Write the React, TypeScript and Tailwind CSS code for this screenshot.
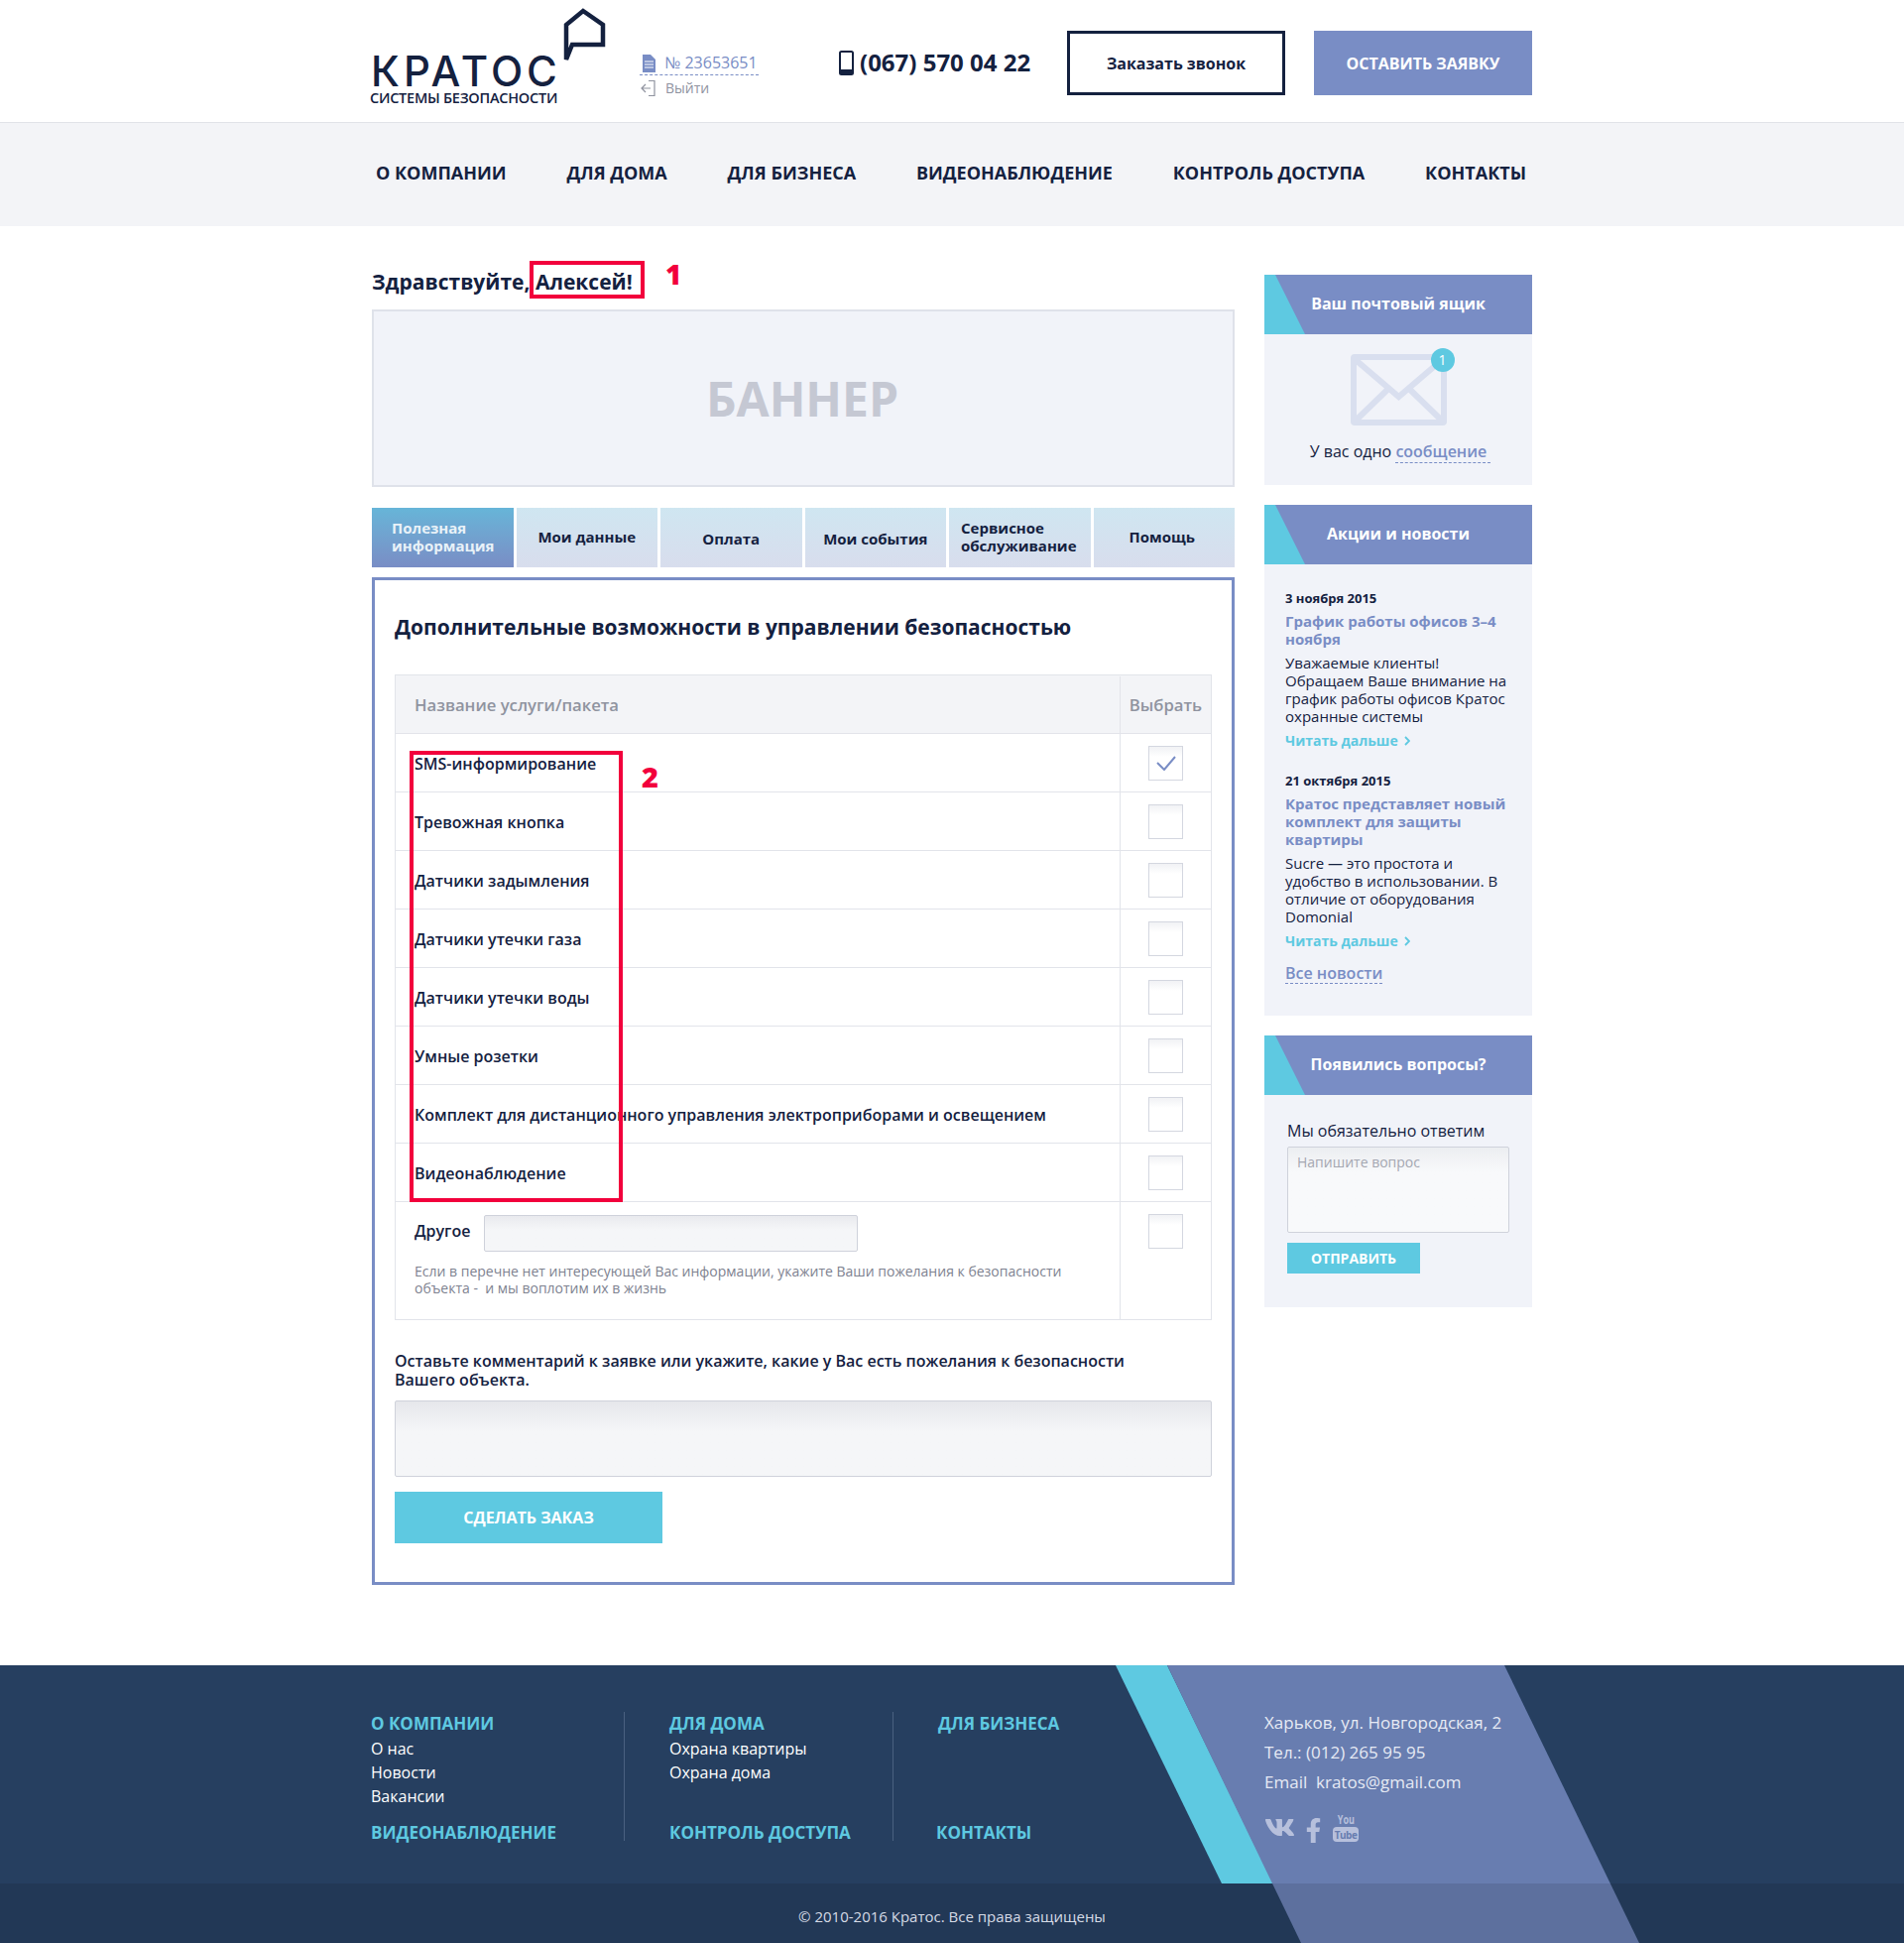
import React from 'react';
import { FaVk, FaFacebookF } from 'react-icons/fa';

const navItems = ['О КОМПАНИИ', 'ДЛЯ ДОМА', 'ДЛЯ БИЗНЕСА', 'ВИДЕОНАБЛЮДЕНИЕ', 'КОНТРОЛЬ ДОСТУПА', 'КОНТАКТЫ'];

const tabs = [
  { label: 'Полезная информация', active: true, cls: 'justify-start pb-[2px] pl-5 pr-2' },
  { label: 'Мои данные', cls: 'justify-center pb-[2px]' },
  { label: 'Оплата', cls: 'justify-center pt-[2px]' },
  { label: 'Мои события', cls: 'justify-center pt-[2px]' },
  { label: 'Сервисное обслуживание', cls: 'justify-start pb-[2px] pl-3 pr-1' },
  { label: 'Помощь', cls: 'justify-center pb-[2px] pr-[4px]' },
];

const services = [
  'SMS-информирование',
  'Тревожная кнопка',
  'Датчики задымления',
  'Датчики утечки газа',
  'Датчики утечки воды',
  'Умные розетки',
  'Комплект для дистанционного управления электроприборами и освещением',
  'Видеонаблюдение',
];

const news = [
  {
    date: '3 ноября 2015',
    title: 'График работы офисов 3–4 ноября',
    text: 'Уважаемые клиенты! Обращаем Ваше внимание на график работы офисов Кратос охранные системы',
  },
  {
    date: '21 октября 2015',
    title: 'Кратос представляет новый комплект для защиты квартиры',
    text: 'Sucre — это простота и удобство в использовании. В отличие от оборудования Domonial',
  },
];

const Checkbox: React.FC<{ checked?: boolean }> = ({ checked }) => (
  <div className="flex h-[35px] w-[35px] items-center justify-center border border-[#d4d7e0] bg-gradient-to-b from-[#f1f2f5] to-white to-30%">
    {checked && (
      <svg width="20" height="15" viewBox="0 0 20 15" fill="none">
        <path d="M1 7l7 7L19 1" stroke="#798dc5" strokeWidth="2" />
      </svg>
    )}
  </div>
);

const CardHeader: React.FC<{ title: string }> = ({ title }) => (
  <div className="relative flex h-[60px] items-center justify-center bg-[#798dc5] pb-[2px] text-[16px] font-bold text-white">
    <svg className="absolute left-0 top-0" width="41" height="60" viewBox="0 0 41 60">
      <polygon points="0,0 11,0 41,60 0,60" fill="#5ec9e1" />
    </svg>
    <span className="relative">{title}</span>
  </div>
);

const FooterColumn: React.FC<{ title: string; links: string[]; bottom: string; cls: string; bottomCls?: string }> = ({ title, links, bottom, cls, bottomCls }) => (
  <div className={`flex h-[130px] flex-col pt-[2px] ${cls}`}>
    <div className="text-[17px] font-bold leading-[20px] text-[#5ec9e1]">{title}</div>
    <div className="mt-[3px] flex-1 text-[16px] leading-[24px] text-white">
      {links.map(l => (
        <div key={l}>{l}</div>
      ))}
    </div>
    <div className={`-mb-[2px] text-[17px] font-bold leading-[20px] text-[#5ec9e1] ${bottomCls ?? ''}`}>{bottom}</div>
  </div>
);

export default function App() {
  return (
    <div className="relative min-h-[1959px] overflow-hidden bg-white font-['Open_Sans',sans-serif] text-[#14213f]">
      <header className="h-[124px] border-b border-[#e1e3e8]">
        <div className="mx-auto flex h-[123px] w-[1170px] items-start">
          <div className="relative h-[123px] w-[270px] shrink-0">
            <div className="absolute -left-px top-[54px] font-['Inter',sans-serif] text-[42px] font-medium leading-[36px] tracking-[4px]">КРАТОС</div>
            <div className="absolute -left-[2px] top-[90px] text-[14.5px] font-semibold leading-[18px] tracking-[-0.25px]">СИСТЕМЫ БЕЗОПАСНОСТИ</div>
            <svg className="absolute left-[193px] top-[8px]" width="44" height="56" viewBox="0 0 44 56" fill="none">
              <path d="M20 3L40 17V37H9L3 52V17Z" stroke="#14213f" strokeWidth="4.5" />
            </svg>
          </div>
          <div className="w-[201px] shrink-0 pt-[53px]">
            <div className="flex w-[120px] items-center gap-[8px] border-b border-dashed border-[#798dc5] pb-[1px] pl-[2px] text-[16px] font-medium leading-[21px] text-[#798dc5]">
              <svg width="15" height="18" viewBox="0 0 15 18">
                <path d="M1 0h8l5 5v13H1z" fill="#798dc5" />
                <path d="M3 7h9M3 10h9M3 13h9" stroke="#fff" strokeWidth="1" />
              </svg>
              № 23653651
            </div>
            <div className="mt-[3px] flex items-center gap-[9px] text-[14px] leading-[20px] text-[#8f939f]">
              <svg width="17" height="18" viewBox="0 0 17 18" fill="none" stroke="#8f939f" strokeWidth="1.2">
                <path d="M9 1.5h6v15H9M11 9H2M6 5L2 9l4 4" />
              </svg>
              Выйти
            </div>
          </div>
          <div className="flex w-[230px] shrink-0 items-center gap-[6px] pt-[49px]">
            <svg width="15" height="25" viewBox="0 0 15 25">
              <rect x="1" y="1" width="13" height="23" rx="1.5" fill="none" stroke="#14213f" strokeWidth="2" />
              <rect x="1" y="19" width="13" height="5" fill="#14213f" />
            </svg>
            <span className="text-[24px] font-bold leading-[28px]">(067) 570 04 22</span>
          </div>
          <div className="mt-[31px] flex h-[65px] w-[220px] shrink-0 items-center justify-center border-[3px] border-[#14213f] text-[16px] font-bold">
            Заказать звонок
          </div>
          <div className="ml-[29px] mt-[31px] flex h-[65px] w-[220px] shrink-0 items-center justify-center bg-[#798dc5] text-[16px] font-bold text-white">
            ОСТАВИТЬ ЗАЯВКУ
          </div>
        </div>
      </header>

      <nav className="h-[104px] bg-[#f3f4f7]">
        <div className="mx-auto flex h-full w-[1170px] items-center justify-between pb-[3px] pl-[4px] pr-[6px] text-[18px] font-bold">
          {navItems.map(item => (
            <span key={item}>{item}</span>
          ))}
        </div>
      </nav>

      <main className="mx-auto flex w-[1170px] justify-between">
        <section className="w-[870px] pt-[41px]">
          <h1 className="mb-[13px] h-[30px] text-[21px] font-bold leading-[30px]">Здравствуйте, Алексей!</h1>
          <div className="mb-[21px] flex h-[179px] items-center justify-center border-2 border-[#dfe2ea] bg-[#f1f3f9] pr-[2px] text-[48px] font-bold text-[#c5c8d3]">
            БАННЕР
          </div>
          <div className="mb-[10px] grid h-[60px] grid-cols-6 gap-[3px]">
            {tabs.map(tab => (
              <div
                key={tab.label}
                className={`flex items-center text-[15px] font-bold leading-[18px] ${tab.cls} ${
                  tab.active
                    ? 'bg-gradient-to-b from-[#66b5d8] to-[#798dc5] text-[#e9f2f8]'
                    : 'bg-gradient-to-b from-[#cfe6f1] to-[#d8dded]'
                }`}
              >
                <span>{tab.label}</span>
              </div>
            ))}
          </div>

          <div className="h-[1016px] border-[3px] border-[#798dc5] px-[20px] pt-[32px]">
            <h2 className="mb-[33px] text-[21px] font-bold leading-[30px]">Дополнительные возможности в управлении безопасностью</h2>

            <div className="border border-[#e2e4ea] text-[16px] font-semibold">
              <div className="flex h-[59px] border-b border-[#e2e4ea] bg-[#f3f4f7] pt-px text-[16.7px] text-[#8f939f]">
                <div className="flex flex-1 items-center pl-[19px]">Название услуги/пакета</div>
                <div className="flex w-[92px] items-center justify-center border-l border-[#e2e4ea]">Выбрать</div>
              </div>
              {services.map((s, i) => (
                <div key={s} className="flex h-[59px] border-b border-[#e2e4ea]">
                  <div className="flex flex-1 items-center pl-[19px] pt-px">{s}</div>
                  <div className="flex w-[92px] items-center justify-center border-l border-[#e2e4ea]">
                    <Checkbox checked={i === 0} />
                  </div>
                </div>
              ))}
              <div className="flex h-[118px]">
                <div className="flex-1 pl-[19px] pt-[13px]">
                  <div className="flex items-start gap-[14px]">
                    <span className="mt-[4px] text-[16px] leading-[24px]">Другое</span>
                    <div className="h-[37px] w-[377px] rounded-[2px] border border-[#cfd2db] bg-gradient-to-b from-[#e9eaee] to-[#f5f6f8] to-40%" />
                  </div>
                  <p className="mt-[11px] w-[680px] text-[14px] font-normal leading-[17px] text-[#7e8290]">
                    Если в перечне нет интересующей Вас информации, укажите Ваши пожелания к безопасности объекта -&nbsp; и мы воплотим их в жизнь
                  </p>
                </div>
                <div className="flex w-[92px] justify-center border-l border-[#e2e4ea] pt-[12px]">
                  <Checkbox />
                </div>
              </div>
            </div>

            <p className="mb-[11px] mt-[32px] w-[760px] text-[16px] font-semibold leading-[19px]">
              Оставьте комментарий к заявке или укажите, какие у Вас есть пожелания к безопасности Вашего объекта.
            </p>
            <div className="h-[77px] rounded-[2px] border border-[#cfd2db] bg-gradient-to-b from-[#e6e7eb] to-[#f5f6f8] to-40%" />
            <div className="mt-[15px] flex h-[52px] w-[270px] items-center justify-center bg-[#5ec9e1] text-[16px] font-bold text-white">
              СДЕЛАТЬ ЗАКАЗ
            </div>
          </div>
        </section>

        <aside className="w-[270px] pt-[49px]">
          <div className="mb-[20px] h-[212px] bg-[#f1f3f9]">
            <CardHeader title="Ваш почтовый ящик" />
            <div className="flex flex-col items-center pt-[20px]">
              <div className="relative h-[72px] w-[97px]">
                <svg width="97" height="72" viewBox="0 0 97 72" fill="none" stroke="#d9dfef" strokeWidth="6">
                  <rect x="3" y="3" width="91" height="66" rx="1" />
                  <path d="M4 5l44.5 38L93 5M5 67l32-31M92 67L60 36" />
                </svg>
                <div className="absolute left-[81px] top-[-6px] flex h-[24px] w-[24px] items-center justify-center rounded-full bg-[#5ec9e1] text-[14px] leading-none text-white">1</div>
              </div>
              <div className="mt-[15px] pl-[4px] text-[16px] leading-[22px]">
                У вас одно{' '}
                <span className="border-b border-dashed border-[#798dc5] pr-1 font-semibold text-[#798dc5]">сообщение</span>
              </div>
            </div>
          </div>

          <div className="mb-[20px] h-[515px] bg-[#f1f3f9]">
            <CardHeader title="Акции и новости" />
            <div className="px-[21px] pt-[25px]">
              {news.map(n => (
                <div key={n.date} className="mb-[22px]">
                  <div className="text-[13px] font-bold leading-[18px]">{n.date}</div>
                  <div className="mt-[5px] text-[15px] font-bold leading-[18px] text-[#798dc5]">{n.title}</div>
                  <p className="mt-[6px] text-[15px] leading-[18px]">{n.text}</p>
                  <div className="mt-[7px] flex items-center gap-[6px] text-[14px] font-bold leading-[18px] text-[#5ec9e1]">
                    Читать дальше
                    <svg width="6" height="10" viewBox="0 0 6 10" fill="none" stroke="#5ec9e1" strokeWidth="1.8">
                      <path d="M1 1l4 4-4 4" />
                    </svg>
                  </div>
                </div>
              ))}
              <span className="-mt-[9px] block w-fit border-b border-dashed border-[#798dc5] text-[16px] font-semibold leading-[20px] text-[#798dc5]">Все новости</span>
            </div>
          </div>

          <div className="h-[274px] bg-[#f1f3f9]">
            <CardHeader title="Появились вопросы?" />
            <div className="px-[23px] pt-[25px]">
              <div className="text-[16px] leading-[22px]">Мы обязательно ответим</div>
              <div className="mt-[5px] h-[87px] w-[224px] rounded-[2px] border border-[#cfd2db] bg-gradient-to-b from-[#eceef1] to-[#f8f9fb] to-30% px-[9px] py-[5px] text-[14px] leading-[20px] text-[#a4a7b1]">
                Напишите вопрос
              </div>
              <div className="mt-[10px] flex h-[31px] w-[134px] items-center justify-center bg-[#5ec9e1] text-[14px] font-bold text-white">
                ОТПРАВИТЬ
              </div>
            </div>
          </div>
        </aside>
      </main>

      <footer className="relative mt-[81px] h-[280px] overflow-hidden bg-[#263f60]">
        <svg className="absolute left-0 top-0" width="1920" height="280" viewBox="0 0 1920 280">
          <polygon points="1125,0 1177,0 1284,220 1232,220" fill="#5ec9e1" />
          <polygon points="1177,0 1517,0 1653,280 1312,280" fill="#687db0" />
        </svg>
        <div className="relative mx-auto flex h-[220px] w-[1172px] pt-[47px]">
          <FooterColumn title="О КОМПАНИИ" links={['О нас', 'Новости', 'Вакансии']} bottom="ВИДЕОНАБЛЮДЕНИЕ" cls="w-[256px] border-r border-[#4a6180]" />
          <FooterColumn title="ДЛЯ ДОМА" links={['Охрана квартиры', 'Охрана дома']} bottom="КОНТРОЛЬ ДОСТУПА" cls="w-[271px] border-r border-[#4a6180] pl-[45px]" />
          <FooterColumn title="ДЛЯ БИЗНЕСА" links={[]} bottom="КОНТАКТЫ" cls="w-[374px] pl-[45px]" bottomCls="-ml-[2px]" />
          <div className="text-[17px] leading-[30px] text-[#e6eaf4]">
            <div className="-mt-[4px]">Харьков, ул. Новгородская, 2</div>
            <div>Тел.: (012) 265 95 95</div>
            <div>Email&nbsp; kratos@gmail.com</div>
            <div className="mt-[15px] flex items-end gap-[6px] text-[#b7c0dc]">
              <FaVk size={31} className="mb-[-1px]" />
              <FaFacebookF size={25} className="mb-[-1px]" />
              <div className="ml-[1px] flex w-[26px] flex-col items-center text-[12px] font-bold leading-[12px]">
                <span className="scale-x-75">You</span>
                <span className="mt-[1px] flex h-[15px] w-[26px] items-center justify-center rounded-[4px] bg-[#b7c0dc] text-[10px] tracking-[-0.5px] text-[#687db0]">Tube</span>
              </div>
            </div>
          </div>
        </div>
        <div className="relative flex h-[60px] items-center justify-center bg-black/10 pt-[6px] text-[15px] text-[#d6dbe6]">
          © 2010-2016 Кратос. Все права защищены
        </div>
      </footer>

      {/* annotation marks that sit over the page */}
      <div className="absolute left-[534px] top-[263px] h-[38px] w-[116px] border-[4px] border-[#f2003c]" />
      <div className="absolute left-[671px] top-[257px] text-[28px] font-extrabold leading-[38px] text-[#f2003c]">1</div>
      <div className="absolute left-[413px] top-[757px] h-[455px] w-[215px] border-[4px] border-[#f2003c]" />
      <div className="absolute left-[647px] top-[764px] text-[29px] font-extrabold leading-[38px] text-[#f2003c]">2</div>
    </div>
  );
}
